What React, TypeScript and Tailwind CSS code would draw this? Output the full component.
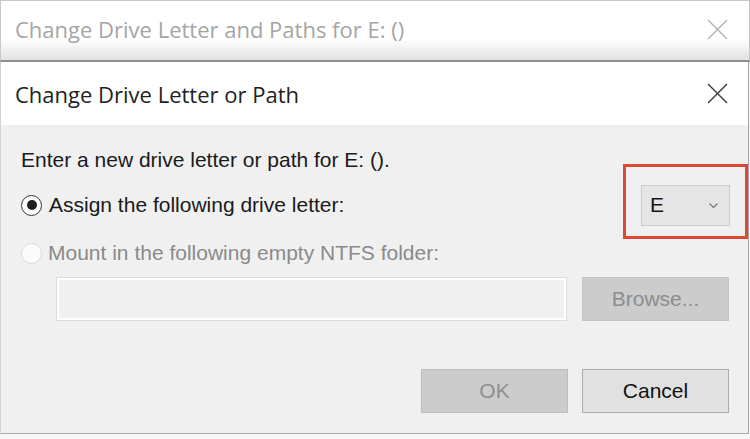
import React from "react";

const CloseIcon = ({ className }: { className: string }) => (
  <svg
    viewBox="0 0 21 21"
    className={className}
    fill="none"
    stroke="currentColor"
    strokeWidth={1.4}
  >
    <line x1="1" y1="1" x2="20" y2="20" />
    <line x1="20" y1="1" x2="1" y2="20" />
  </svg>
);

const Radio = ({ checked }: { checked?: boolean }) =>
  checked ? (
    <div className="w-[21px] h-[21px] rounded-full border-[1.5px] border-[#333333] bg-white flex items-center justify-center flex-shrink-0">
      <div className="w-[10px] h-[10px] rounded-full bg-[#1f1f1f]" />
    </div>
  ) : (
    <div className="w-[21px] h-[21px] rounded-full border border-[#d9d9d9] bg-[#fbfbfb] flex-shrink-0" />
  );

const App = () => {
  return (
    <div className="w-[750px] h-[439px] bg-[#f7f7f7] overflow-hidden font-['Liberation_Sans',Arial,sans-serif]">
      {/* window behind */}
      <div className="h-[62px] border-t border-x border-[#c8c8c8] border-b-2 border-b-[#8e8e8e] bg-linear-to-b from-white from-65% to-[#e2e2e2]">
        <div className="h-[56px] flex items-center justify-between pl-[14px] pr-[21px]">
          <span className="font-['Open_Sans',sans-serif] text-[22px] leading-[30px] text-[#a5a5a5]">
            Change Drive Letter and Paths for E: ()
          </span>
          <CloseIcon className="w-[21px] h-[21px] text-[#b5b5b5]" />
        </div>
      </div>

      {/* dialog */}
      <div className="w-[749px] border-l border-[#d2d2d2] border-r border-r-[#a3a3a3] border-b border-b-[#ababab]">
        <div className="h-[63px] bg-white flex items-center justify-between pl-[14px] pr-[20px]">
          <span className="font-['Open_Sans',sans-serif] text-[22px] leading-[30px] text-[#222222]">
            Change Drive Letter or Path
          </span>
          <CloseIcon className="w-[21px] h-[21px] text-[#3d3d3d]" />
        </div>

        <div className="h-[308px] bg-[#f0f0f0] pl-[20px] pr-[19px] pt-[23px] flex flex-col text-[21px]">
          <p className="h-[24px] leading-[24px] text-[#1a1a1a]">
            Enter a new drive letter or path for E: ().
          </p>

          <div className="mt-[13px] h-[40px] flex items-center justify-between">
            <div className="flex items-center gap-[7px]">
              <Radio checked />
              <span className="leading-[24px] text-[#1a1a1a]">
                Assign the following drive letter:
              </span>
            </div>
            <div className="relative mr-[-1px]">
              <div className="w-[89px] h-[41px] bg-[#e5e5e5] border border-[#cbcbcb] flex items-center justify-between pl-[8px] pr-[11px]">
                <span className="leading-[24px] text-[#151515]">E</span>
                <svg
                  viewBox="0 0 9 5"
                  className="w-[9px] h-[5px] text-[#7a7a7a]"
                  fill="none"
                  stroke="currentColor"
                  strokeWidth={1.2}
                >
                  <polyline points="0.5,0.5 4.5,4.5 8.5,0.5" />
                </svg>
              </div>
              <div className="absolute -left-[18px] -top-[21px] w-[125px] h-[75px] border-[3px] border-[#dc4a33] pointer-events-none" />
            </div>
          </div>

          <div className="mt-[8px] h-[40px] flex items-center gap-[6px]">
            <Radio />
            <span className="leading-[24px] text-[#8a8a8a]">
              Mount in the following empty NTFS folder:
            </span>
          </div>

          <div className="mt-[4px] flex gap-[15px] pl-[35px]">
            <div className="w-[511px] h-[44px] bg-[#f0f0f0] border border-[#dadada] shadow-[inset_0_0_0_2px_#ffffff]" />
            <button className="w-[147px] h-[44px] bg-[#cccccc] border border-[#c4c4c4] text-[#8d8d8d] leading-[24px]">
              Browse...
            </button>
          </div>

          <div className="mt-[48px] flex justify-end gap-[14px]">
            <button className="w-[147px] h-[44px] bg-[#cccccc] border border-[#bdbdbd] text-[#8f8f8f] leading-[24px]">
              OK
            </button>
            <button className="w-[147px] h-[44px] bg-[#e1e1e1] border border-[#adadad] text-[#111111] leading-[24px]">
              Cancel
            </button>
          </div>
        </div>
      </div>
    </div>
  );
};

export default App;
